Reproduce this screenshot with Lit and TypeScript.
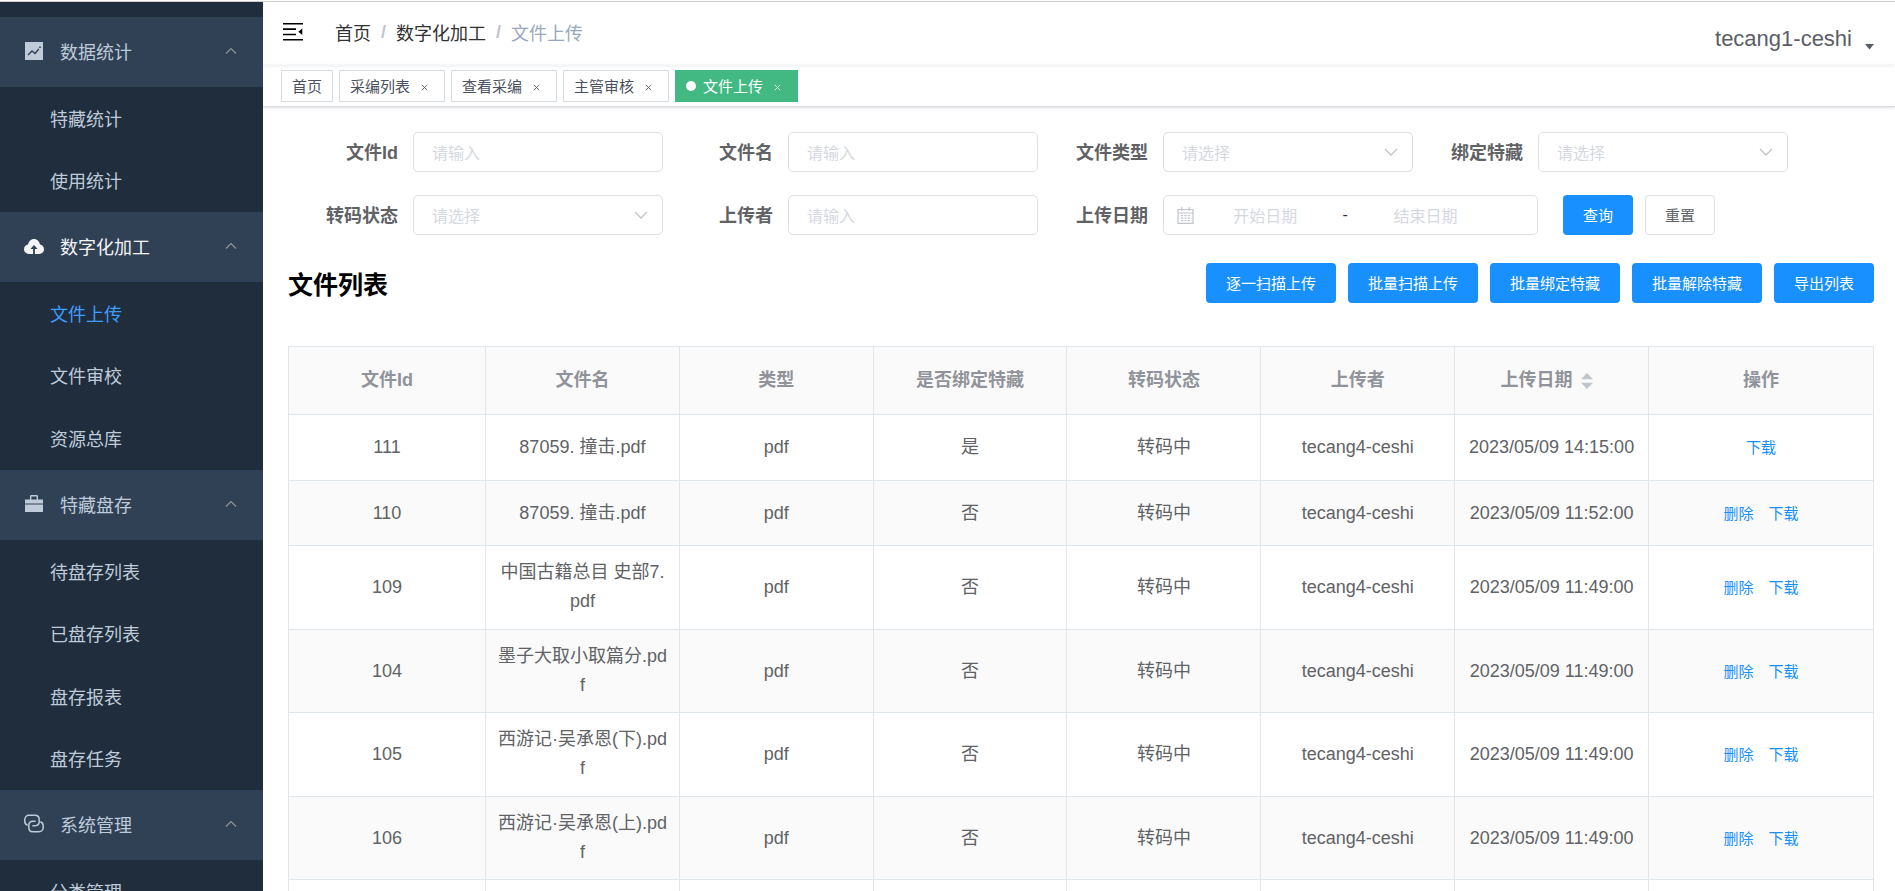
import { LitElement, html, svg, css, nothing } from "lit";
import { customElement, property } from "lit/decorators.js";
import { classMap } from "lit/directives/class-map.js";

const icons: Record<string, unknown> = {
  chart: svg`<path fill="currentColor" d="M1 1h18v18H1z"/><path fill="none" stroke="#304156" stroke-width="1.4" d="M4 14l4-4 3 2.500 3.800-4.500"/><circle cx="16" cy="6.200" r="0.900" fill="#304156"/>`,
  cloud: svg`<path fill="currentColor" d="M4.800 18C2 18 0 16 0 13.300c0-2.400 1.700-4.300 4-4.700C4.600 5.300 7 3 10 3s5.400 2.300 6 5.600c2.300.4 4 2.300 4 4.700 0 2.700-2 4.700-4.800 4.700z"/><path fill="#304156" d="M10 9l3.600 3.900h-2.700V18H9.100v-5.100H6.400z"/>`,
  briefcase: svg`<path fill="currentColor" d="M1 5.500h5V2.400C6 1.600 6.500 1 7.300 1h5.400c.8 0 1.300.6 1.300 1.400v3.100h5v4H1zM7.400 2.400v3.100h5.200V2.400zM1 10.600h18V18H1z" fill-rule="evenodd"/>`,
  link: svg`<g fill="none" stroke="currentColor" stroke-width="1.500"><path d="M3.600 11.300C1.800 10.600 .8 9.400 .8 7.600V5.500C.8 3 2.700 1.200 5 1.200h6c2.400 0 4.200 1.800 4.200 4.300v2.100c0 2.400-1.800 4.100-4.200 4.100H8.400"/><path d="M16.400 7.700c1.800.7 2.800 1.900 2.800 3.700v2.100c0 2.500-1.900 4.300-4.200 4.300H9c-2.400 0-4.200-1.800-4.200-4.300v-2.100c0-2.400 1.800-4.100 4.200-4.100h2.600"/></g>`,
};

interface MenuGroup {
  icon: string;
  title: string;
  active?: boolean;
  items: string[];
}

const menu: MenuGroup[] = [
  { icon: "chart", title: "数据统计", items: ["特藏统计", "使用统计"] },
  { icon: "cloud", title: "数字化加工", active: true, items: ["文件上传", "文件审校", "资源总库"] },
  { icon: "briefcase", title: "特藏盘存", items: ["待盘存列表", "已盘存列表", "盘存报表", "盘存任务"] },
  { icon: "link", title: "系统管理", items: ["分类管理"] },
];

@customElement("side-menu")
export class SideMenu extends LitElement {
  @property() current = "";

  static styles = css`
    :host {
      display: block;
      overflow: hidden;
      padding-top: 15px;
      box-sizing: border-box;
      background: #1f2d3d;
      color: #bfcbd9;
      font-size: 18px;
    }
    .group-title {
      display: flex;
      align-items: center;
      width: 100%;
      height: 70px;
      padding: 0 26px 2px 24px;
      border: 0;
      background: #304156;
      color: inherit;
      font: inherit;
      text-align: left;
      cursor: pointer;
    }
    .group-title.active {
      color: #f4f4f5;
    }
    .icon {
      width: 20px;
      height: 20px;
      margin-right: 16px;
    }
    .name {
      flex: 1;
    }
    .arrow {
      width: 12px;
      height: 8px;
      color: #909399;
    }
    .items {
      list-style: none;
      margin: 0;
      padding: 0;
    }
    .item {
      display: flex;
      align-items: center;
      height: 63px;
      box-sizing: border-box;
      padding: 0 0 2px 50px;
      color: inherit;
      text-decoration: none;
    }
    li:nth-child(even) .item {
      height: 62px;
    }
    .item.current {
      color: #409eff;
    }
  `;

  render() {
    return html`<nav>
      ${menu.map(
        (group) => html`
          <button class=${classMap({ "group-title": true, active: !!group.active })} type="button">
            <svg class="icon" viewBox="0 0 20 20" aria-hidden="true">${icons[group.icon]}</svg>
            <span class="name">${group.title}</span>
            <svg class="arrow" viewBox="0 0 12 8" aria-hidden="true">
              <path d="M1 6.500l5-5 5 5" fill="none" stroke="currentColor" stroke-width="1.200" />
            </svg>
          </button>
          <ul class="items">
            ${group.items.map(
              (item) => html`<li>
                <a href="#" class=${classMap({ item: true, current: item === this.current })}>${item}</a>
              </li>`
            )}
          </ul>
        `
      )}
    </nav>`;
  }
}

@customElement("top-bar")
export class TopBar extends LitElement {
  static styles = css`
    :host {
      display: block;
    }
    .bar {
      display: flex;
      align-items: center;
      height: 63px;
      padding: 0 21px 3px 20px;
      box-sizing: border-box;
      box-shadow: 0 1px 4px rgba(0, 21, 41, 0.08);
    }
    button {
      border: 0;
      padding: 0;
      background: none;
      color: inherit;
      font: inherit;
      cursor: pointer;
    }
    .fold {
      width: 20px;
      height: 18px;
      margin-right: 32px;
      color: #000;
    }
    .fold svg {
      display: block;
    }
    .crumbs {
      display: flex;
      align-items: center;
      flex: 1;
      font-size: 18px;
      color: #303133;
    }
    .crumbs a {
      color: inherit;
      text-decoration: none;
    }
    .sep {
      margin: 0 10px;
      color: #c0c4cc;
      font-weight: 700;
    }
    .here {
      color: #97a8be;
    }
    .user {
      display: flex;
      align-items: flex-end;
      gap: 13px;
      padding-top: 14px;
      font-size: 22px;
      line-height: 26px;
      color: #5a5e66;
    }
    .user svg {
      margin-bottom: 2px;
    }
    .tags {
      display: flex;
      gap: 6px;
      padding: 5px 18px 4px;
      border-bottom: 1px solid #d8dce5;
      box-shadow: 0 1px 3px rgba(0, 0, 0, 0.12), 0 0 3px rgba(0, 0, 0, 0.04);
    }
    .tag {
      display: flex;
      align-items: center;
      height: 32px;
      box-sizing: border-box;
      padding: 0 10px 1px;
      border: 1px solid #d8dce5;
      color: #495060;
      font-size: 15px;
      background: #fff;
    }
    .tag a {
      color: inherit;
      text-decoration: none;
    }
    .tag.on {
      border-color: #42b983;
      background: #42b983;
      color: #fff;
    }
    .dot {
      width: 10px;
      height: 10px;
      margin-right: 7px;
      border-radius: 50%;
      background: #fff;
    }
    .close {
      display: flex;
      justify-content: center;
      width: 20px;
      margin-left: 4px;
      padding-top: 4px;
    }
  `;

  render() {
    const tags = ["首页", "采编列表", "查看采编", "主管审核", "文件上传"];
    return html`
      <header class="bar">
        <button class="fold" type="button" aria-label="收起菜单">
          <svg width="20" height="18" viewBox="0 0 20 18" fill="currentColor" aria-hidden="true">
            <path d="M0 0h20v1.600H0zM0 5.300h13v1.600H0zM0 10.700h13v1.600H0zM0 16h20v1.600H0zM19.300 5.500v6.600L15.300 8.800z" />
          </svg>
        </button>
        <nav class="crumbs">
          <a href="#">首页</a><span class="sep">/</span><a href="#">数字化加工</a><span class="sep">/</span
          ><span class="here">文件上传</span>
        </nav>
        <button class="user" type="button">
          <span>tecang1-ceshi</span>
          <svg width="9" height="6" viewBox="0 0 9 6" aria-hidden="true">
            <path d="M0 0h9L4.500 5.500z" fill="currentColor" />
          </svg>
        </button>
      </header>
      <nav class="tags">
        ${tags.map((tag, i) => {
          const on = i === tags.length - 1;
          return html`<span class=${classMap({ tag: true, on })}>
            ${on ? html`<span class="dot"></span>` : nothing}<a href="#">${tag}</a>${i > 0
              ? html`<button class="close" type="button" aria-label="关闭">
                  <svg width="7" height="7" viewBox="0 0 7 7" aria-hidden="true">
                    <path d="M.8.8l5.400 5.400M6.200.8L.8 6.200" stroke="currentColor" stroke-width="0.800" />
                  </svg>
                </button>`
              : nothing}
          </span>`;
        })}
      </nav>
    `;
  }
}

@customElement("filter-form")
export class FilterForm extends LitElement {
  static styles = css`
    .form {
      display: flex;
      flex-wrap: wrap;
      row-gap: 23px;
    }
    .field {
      display: flex;
      align-items: center;
    }
    .label {
      width: 110px;
      margin-right: 15px;
      padding-bottom: 2px;
      text-align: right;
      font-size: 18px;
      font-weight: 700;
      color: #606266;
      white-space: nowrap;
    }
    .box {
      display: grid;
      align-items: center;
      width: 250px;
      height: 40px;
      box-sizing: border-box;
      border: 1px solid #dcdfe6;
      border-radius: 5px;
      background: #fff;
    }
    input,
    select {
      grid-area: 1 / 1;
      width: 100%;
      height: 38px;
      margin: 0;
      padding: 3px 18px 0;
      box-sizing: border-box;
      border: 0;
      outline: 0;
      background: none;
      appearance: none;
      font: inherit;
      font-size: 16px;
      color: #d5d8df;
    }
    input::placeholder {
      color: #d5d8df;
      opacity: 1;
    }
    .down {
      grid-area: 1 / 1;
      justify-self: end;
      margin-right: 14px;
      pointer-events: none;
    }
    .range {
      display: flex;
      width: 375px;
      padding: 0 13px;
    }
    .range input {
      width: 41%;
      padding: 3px 0 0;
      text-align: center;
    }
    .dash {
      flex: 1;
      max-width: 18px;
      text-align: center;
      font-size: 16px;
      color: #303133;
    }
    .actions {
      display: flex;
      gap: 12px;
      margin-left: 25px;
    }
    .btn {
      height: 40px;
      padding: 0 20px 2px;
      border: 0;
      border-radius: 4px;
      background: #1890ff;
      color: #fff;
      font: inherit;
      font-size: 15px;
      cursor: pointer;
    }
    .btn.plain {
      padding: 0 19px 2px;
      border: 1px solid #dcdfe6;
      background: #fff;
      color: #606266;
    }
  `;

  private textField(id: string, label: string) {
    return html`<div class="field">
      <label class="label" for=${id}>${label}</label>
      <div class="box"><input id=${id} type="text" placeholder="请输入" /></div>
    </div>`;
  }

  private selectField(id: string, label: string) {
    return html`<div class="field">
      <label class="label" for=${id}>${label}</label>
      <div class="box">
        <select id=${id}>
          <option>请选择</option>
        </select>
        <svg class="down" width="14" height="8" viewBox="0 0 14 8" aria-hidden="true">
          <path d="M1 1l6 6 6-6" fill="none" stroke="#c0c4cc" stroke-width="1.300" />
        </svg>
      </div>
    </div>`;
  }

  render() {
    return html`<form class="form">
      ${this.textField("file-id", "文件Id")} ${this.textField("file-name", "文件名")}
      ${this.selectField("file-type", "文件类型")} ${this.selectField("bound", "绑定特藏")}
      ${this.selectField("status", "转码状态")} ${this.textField("uploader", "上传者")}
      <div class="field">
        <label class="label" for="date-from">上传日期</label>
        <div class="box range">
          <svg width="17" height="17" viewBox="0 0 17 17" aria-hidden="true">
            <path
              d="M1 2.500h15v13.900H1zM1 6h15M4.700 0v4M12.300 0v4"
              fill="none"
              stroke="#c0c4cc"
              stroke-width="1.200"
            />
            <path
              d="M4 8.700h9M4 11.200h9M4 13.700h9"
              fill="none"
              stroke="#c0c4cc"
              stroke-width="1.200"
              stroke-dasharray="2.200 1.200"
            />
          </svg>
          <input id="date-from" type="text" placeholder="开始日期" />
          <span class="dash">-</span>
          <input id="date-to" type="text" placeholder="结束日期" aria-label="结束日期" />
        </div>
      </div>
      <div class="actions">
        <button class="btn" type="button">查询</button>
        <button class="btn plain" type="button">重置</button>
      </div>
    </form>`;
  }
}

interface FileRow {
  id: string;
  name: string;
  bound: string;
  date: string;
  actions: string[];
}

const rows: FileRow[] = [
  { id: "111", name: "87059. 撞击.pdf", bound: "是", date: "2023/05/09 14:15:00", actions: ["下载"] },
  { id: "110", name: "87059. 撞击.pdf", bound: "否", date: "2023/05/09 11:52:00", actions: ["删除", "下载"] },
  { id: "109", name: "中国古籍总目 史部7.pdf", bound: "否", date: "2023/05/09 11:49:00", actions: ["删除", "下载"] },
  { id: "104", name: "墨子大取小取篇分.pdf", bound: "否", date: "2023/05/09 11:49:00", actions: ["删除", "下载"] },
  { id: "105", name: "西游记·吴承恩(下).pdf", bound: "否", date: "2023/05/09 11:49:00", actions: ["删除", "下载"] },
  { id: "106", name: "西游记·吴承恩(上).pdf", bound: "否", date: "2023/05/09 11:49:00", actions: ["删除", "下载"] },
  { id: "", name: "", bound: "", date: "", actions: [] },
];

@customElement("file-table")
export class FileTable extends LitElement {
  static styles = css`
    table {
      width: 100%;
      table-layout: fixed;
      border-collapse: separate;
      border-spacing: 0;
      border-top: 1px solid #dfe6ec;
      border-left: 1px solid #dfe6ec;
      box-sizing: border-box;
      font-size: 18px;
      line-height: 29px;
      color: #606266;
      text-align: center;
    }
    .col-first {
      width: 197px;
    }
    .col-last {
      width: 225px;
    }
    th,
    td {
      box-sizing: border-box;
      border-right: 1px solid #dfe6ec;
      border-bottom: 1px solid #dfe6ec;
      word-break: break-all;
    }
    th {
      padding: 19px 11px;
      background: #fafafa;
      color: #909399;
      font-weight: 700;
    }
    td {
      padding: 12px 11px 13px;
    }
    tbody tr:nth-child(even) td {
      padding-bottom: 12px;
      background: #fafafa;
    }
    .sort {
      display: inline-flex;
      align-items: center;
      gap: 8px;
      padding: 0 10px 0 0;
      border: 0;
      background: none;
      color: inherit;
      font: inherit;
      cursor: pointer;
    }
    .ops {
      display: flex;
      justify-content: center;
      gap: 15px;
      height: 40px;
    }
    .ops button {
      padding: 0;
      border: 0;
      background: none;
      color: #1890ff;
      font: inherit;
      font-size: 15px;
      cursor: pointer;
    }
  `;

  render() {
    const cell = (row: FileRow, text: string) => (row.id ? text : "");
    return html`<table>
      <colgroup>
        <col class="col-first" />
        <col span="6" />
        <col class="col-last" />
      </colgroup>
      <thead>
        <tr>
          <th>文件Id</th>
          <th>文件名</th>
          <th>类型</th>
          <th>是否绑定特藏</th>
          <th>转码状态</th>
          <th>上传者</th>
          <th>
            <button class="sort" type="button">
              上传日期
              <svg width="12" height="16" viewBox="0 0 12 16" aria-hidden="true">
                <path d="M0 6.300L6 0l6 6.300zM0 9.700h12L6 16z" fill="#c0c4cc" />
              </svg>
            </button>
          </th>
          <th>操作</th>
        </tr>
      </thead>
      <tbody>
        ${rows.map(
          (row) => html`<tr>
            <td>${row.id}</td>
            <td>${row.name}</td>
            <td>${cell(row, "pdf")}</td>
            <td>${row.bound}</td>
            <td>${cell(row, "转码中")}</td>
            <td>${cell(row, "tecang4-ceshi")}</td>
            <td>${row.date}</td>
            <td>
              <div class="ops">${row.actions.map((a) => html`<button type="button">${a}</button>`)}</div>
            </td>
          </tr>`
        )}
      </tbody>
    </table>`;
  }
}

@customElement("app-root")
export class AppRoot extends LitElement {
  static styles = css`
    :host {
      display: flex;
      flex-direction: column;
      height: 100vh;
      box-sizing: border-box;
      padding-top: 1px;
      overflow: hidden;
      background: #fff;
      font-family: "Liberation Sans", "Noto Sans CJK SC", sans-serif;
    }
    .shell {
      display: grid;
      grid-template-columns: 263px minmax(0, 1fr);
      flex: 1;
      min-height: 0;
      border-top: 1px solid #ccc;
    }
    .main {
      min-width: 0;
      overflow: hidden;
    }
    .content {
      padding: 25px 21px 0 25px;
    }
    .toolbar {
      display: flex;
      align-items: center;
      gap: 12px;
      margin: 28px 0 43px;
    }
    .title {
      flex: 1;
      margin: 0;
      padding-top: 4px;
      font-size: 25px;
      line-height: 36px;
      color: #000;
    }
    .btn {
      height: 40px;
      padding: 0 20px 2px;
      border: 0;
      border-radius: 4px;
      background: #1890ff;
      color: #fff;
      font: inherit;
      font-size: 15px;
      cursor: pointer;
    }
  `;

  render() {
    const actions = ["逐一扫描上传", "批量扫描上传", "批量绑定特藏", "批量解除特藏", "导出列表"];
    return html`<div class="shell">
      <side-menu current="文件上传"></side-menu>
      <div class="main">
        <top-bar></top-bar>
        <main class="content">
          <filter-form></filter-form>
          <div class="toolbar">
            <h2 class="title">文件列表</h2>
            ${actions.map((a) => html`<button class="btn" type="button">${a}</button>`)}
          </div>
          <file-table></file-table>
        </main>
      </div>
    </div>`;
  }
}
